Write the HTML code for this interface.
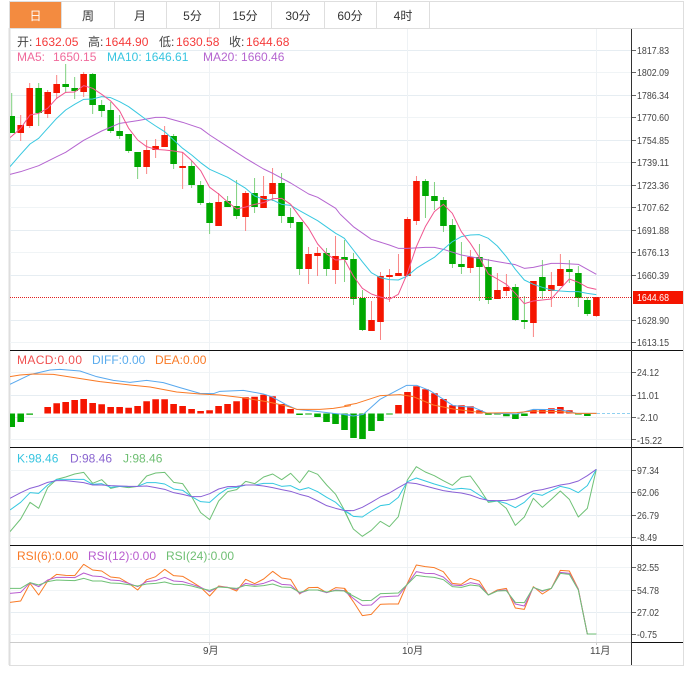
<!DOCTYPE html>
<html><head><meta charset="utf-8"><style>
html,body{margin:0;padding:0;background:#fff;width:693px;height:675px;overflow:hidden}
svg{display:block}
text{font-family:"Liberation Sans","Noto Sans CJK SC",sans-serif;font-size:12px}
.t{font-size:12px;fill:#333;text-anchor:middle}
.a{font-size:10px;fill:#444}
.l{fill:none;stroke-width:3;stroke-linejoin:round}
</style></head><body>
<svg width="693" height="675" viewBox="0 0 693 675" xmlns="http://www.w3.org/2000/svg">
<defs><clipPath id="c"><rect x="10" y="29" width="621" height="613"/></clipPath></defs>
<!-- toolbar -->
<rect x="10" y="2" width="51" height="26" fill="#f38b40"/>
<path d="M9 1.5H683.5V665.5H9.5V1.5M10 28.5H683.5M61.5 2V28M114.5 2V28M166.5 2V28M219.5 2V28M271.5 2V28M324.5 2V28M376.5 2V28M429.5 2V28" fill="none" stroke="#dedede"/>
<path d="M9.5 28V665" stroke="#dedede" stroke-width="2" fill="none"/>
<text class="t" x="35.5" y="20" style="fill:#fff">日</text>
<text class="t" x="88" y="20">周</text>
<text class="t" x="140" y="20">月</text>
<text class="t" x="192.5" y="20">5分</text>
<text class="t" x="245" y="20">15分</text>
<text class="t" x="298" y="20">30分</text>
<text class="t" x="350" y="20">60分</text>
<text class="t" x="403" y="20">4时</text>
<!-- grid -->
<path d="M10 50.5H631M10 95.5H631M10 140.5H631M10 185.5H631M10 230.5H631M10 275.5H631M10 320.5H631M10 395.5H631M10 417.5H631M10 492.5H631M10 515.5H631M10 612.5H631" stroke="#e6edf2" fill="none"/>
<path d="M10 72.5H631M10 117.5H631M10 162.5H631M10 207.5H631M10 252.5H631M10 342.5H631M10 372.5H631M10 439.5H631M10 470.5H631M10 537.5H631M10 567.5H631M10 590.5H631M10 634.5H631" stroke="#f0f4f6" fill="none"/>
<path d="M209.5 29V642M407.5 29V642M596.5 29V642" stroke="#eef2f5" fill="none"/>
<!-- chart -->
<g clip-path="url(#c)">
<g transform="translate(11.7 0) scale(.99944 1)" fill="none">
<path stroke="#7fd17f" d="M0 93V133M27 83V126M54 64V93M63 77V99M81 73V114M90 100V117M99 102V133M108 115V139M117 134V153M126 152V179M162 134V169M180 161V188M189 181V205M198 202V234M216 196V207M225 180V219M243 178V213M270 173V223M279 208V228M288 222V275M315 248V276M333 240V282M342 253V305M351 290V331M414 179V218M423 182V210M432 197V232M441 219V268M450 242V274M468 244V301M477 259V304M504 284V321M513 296V329M531 260V299M558 260V283M567 266V307M576 297V316"/>
<path stroke="#f98686" d="M9 115V141M18 83V128M36 90V118M45 75V99M72 72V97M135 140V174M144 139V158M153 126V147M171 152V189M207 193V226M234 191V231M252 176V208M261 168V201M297 247V284M306 247V276M324 236V284M360 301V331M369 272V340M378 269V302M387 254V276M396 217V276M405 176V225M459 250V273M486 273V299M495 274V296M522 281V337M540 272V307M549 254V286M585 297V317"/>
<path stroke="#00a800" stroke-width="6.6" d="M0 116V133M27 88V113M54 84V87M63 88V91M81 74V105M90 105V111M99 110V131M108 131V136M117 134V151M126 152V167M162 136V164M180 166V185M189 185V203M198 203V223M216 201V207M225 206V216M243 193V207M270 183V216M279 217V223M288 222V269M315 253V269M333 257V260M342 259V299M351 298V330M414 181V196M423 196V201M432 200V226M441 225V264M450 264V267M468 257V267M477 267V300M504 287V320M513 320V322M531 277V291M558 269V272M567 273V298M576 300V314"/>
<path stroke="#f51500" stroke-width="6.6" d="M9 125V133M18 88V126M36 92V114M45 84V93M72 74V92M135 150V167M144 146V150M153 135V147M171 166V168M207 202V226M234 193V217M252 196V208M261 183V194M297 254V269M306 253V256M324 256V270M360 320V331M369 276V322M378 275V277M387 273V276M396 219V276M405 181V221M459 257V268M486 290V299M495 287V291M522 281V323M540 285V291M549 269V286M585 297V316"/>
<!-- MACD bars -->
<path stroke="#f51500" stroke-width="6.6" d="M36 407V413.5M45 403.3V413.5M54 402V413.5M63 400V413.5M72 399V413.5M81 403V413.5M90 404.3V413.5M99 407V413.5M108 407V413.5M117 407.7V413.5M126 406V413.5M135 401.3V413.5M144 399.3V413.5M153 399.3V413.5M162 404V413.5M171 406V413.5M180 409V413.5M189 411V413.5M198 410.3V413.5M207 406V413.5M216 404V413.5M225 401.3V413.5M234 397.3V413.5M243 396.7V413.5M252 394.7V413.5M261 396.3V413.5M270 404V413.5M279 409V413.5M387 405V413.5M396 392V413.5M405 386.3V413.5M414 389.3V413.5M423 393.3V413.5M432 399V413.5M441 405.3V413.5M450 405.3V413.5M459 406.3V413.5M468 410.3V413.5M522 410V413.5M531 410V413.5M540 408.3V413.5M549 407V413.5M558 410.3V413.5"/>
<path stroke="#00a800" stroke-width="6.6" d="M0 413.5V427M9 413.5V422M18 413.5V414.7M288 413.5V415M297 413.5V414.5M306 413.5V417M315 413.5V422M324 413.5V424M333 413.5V430M342 413.5V438M351 413.5V439M360 413.5V431M369 413.5V421M378 413.5V414.5M477 413.5V414.7M486 413.5V414.5M495 413.5V416.3M504 413.5V419M513 413.5V416M567 413.5V414.5M576 413.5V416"/>
</g>
<path d="M597 413.5H631" stroke="#8fd0f0" stroke-dasharray="3 2" fill="none"/>
<path d="M10 297.5H631" stroke="#e02020" stroke-dasharray="1 1" fill="none"/>
<!-- MA lines -->
<g transform="scale(.33333)">
<polyline class="l" stroke="#b565d0" points="30,523 62,515 116,497 170,470 197,457 251,421 305,393 359,370 413,362 467,352 494,352 548,367 602,385 629,405 683,440 737,475 791,507 818,520 872,549 926,582 953,592 1007,625 1020,642"/>
<polyline class="l" stroke="#38c8e0" points="30,500 62,463 90,432 116,415 143,385 170,355 197,330 224,313 251,298 278,297 305,290 332,293 359,305 386,320 413,340 440,360 467,378 494,395 521,420 548,445 575,465 602,488 629,508 683,532 737,565 764,588 791,598 818,600 845,613 872,616 899,632 953,662 1007,700 1020,707"/>
<polyline class="l" stroke="#f0558f" points="30,413 62,385 90,345 116,340 143,325 170,295 197,277 224,276 251,257 278,265 305,283 332,303 359,333 386,385 413,420 440,440 467,448 494,450 521,453 548,457 575,482 602,512 629,562 656,582 683,606 710,627 737,621 764,613 791,608 818,596 845,595 872,613 899,650 926,685 953,732 980,762 1007,780 1034,778"/>
</g>
<g transform="translate(340 170) scale(.33333)">
<polyline class="l" stroke="#b565d0" points="0,132 40,170 94,208 148,225 175,235 202,235 256,232 283,232 310,238 364,255 418,265 472,275 526,284 553,295 580,292 607,286 634,280 661,280 715,283 742,298 769,313"/>
<polyline class="l" stroke="#38c8e0" points="0,197 13,205 40,240 67,275 94,308 121,323 148,329 175,330 202,318 229,295 256,278 283,262 310,238 337,215 364,200 391,195 418,194 445,205 472,228 499,260 526,298 553,330 580,343 607,352 634,360 661,363 688,365 715,365 742,370 769,374"/>
<polyline class="l" stroke="#f0558f" points="13,268 40,318 67,355 94,372 121,381 148,388 175,373 202,310 229,230 256,170 283,125 310,103 337,130 364,185 391,220 418,262 445,312 472,327 499,343 526,370 553,401 580,393 607,390 634,387 661,356 688,327 715,337 742,352 769,358"/>
</g>
<!-- MACD lines -->
<g transform="translate(0 345) scale(.33333)">
<polyline class="l" stroke="#58a8ee" points="30,118 90,89 150,75 180,73 240,78 290,95 340,106 390,112 440,106 490,113 540,128 600,145 640,146 660,139 730,136 790,147 815,155 860,180 890,193 950,199 1000,205 1053,210"/>
<polyline class="l" stroke="#f97a26" points="30,95 60,90 100,87 160,88 230,99 300,110 390,120 450,126 530,141 600,147 660,150 720,157 800,170 860,183 890,193 960,193 1000,190 1053,182"/>
</g>
<g transform="translate(340 345) scale(.33333)">
<polyline class="l" stroke="#58a8ee" points="13,209 40,213 70,208 120,163 200,121 230,121 270,137 340,182 400,187 440,204 530,207 580,193 660,194 710,205 770,205"/>
<polyline class="l" stroke="#f97a26" points="13,182 50,175 120,152 180,149 220,155 280,180 340,192 400,200 440,204 530,203 580,198 660,200 710,205 770,205"/>
</g>
<!-- KDJ -->
<g transform="translate(0 445) scale(.33333)">
<polyline class="l" stroke="#6fc176" points="30,260 62,222 90,172 116,190 143,128 170,103 197,96 224,87 251,82 278,115 305,104 332,130 359,124 386,128 413,124 440,93 467,84 494,82 521,112 548,116 575,155 602,203 629,224 656,168 683,140 710,134 737,109 764,116 791,96 818,87 845,104 872,85 899,113 926,77 953,88 980,120 1007,148 1034,197 1053,238"/>
<polyline class="l" stroke="#35c8e0" points="30,195 62,172 90,143 116,145 143,120 170,103 197,103 224,103 251,103 278,118 305,116 332,127 359,124 386,125 413,124 440,113 467,113 494,117 521,132 548,136 575,155 602,170 629,172 656,148 683,130 710,127 737,120 764,120 791,115 818,115 845,124 872,122 899,135 926,128 953,140 980,157 1007,172 1034,197 1053,208"/>
<polyline class="l" stroke="#8a60d6" points="30,160 62,143 90,130 116,123 143,112 170,107 197,107 224,110 251,113 278,120 305,120 332,122 359,123 386,124 413,124 440,123 467,128 494,133 521,143 548,148 575,155 602,155 629,146 656,132 683,125 710,124 737,120 764,120 791,123 818,128 845,134 872,139 899,148 926,155 953,168 980,182 1007,190 1034,197 1053,197"/>
</g>
<g transform="translate(340 445) scale(.33333)">
<polyline class="l" stroke="#6fc176" points="13,197 40,252 67,274 94,256 121,229 148,245 175,215 202,105 229,65 256,81 283,92 310,107 337,121 364,97 391,93 418,130 445,172 472,168 499,190 526,241 553,216 580,160 607,187 634,163 661,138 688,163 715,216 742,190 769,73"/>
<polyline class="l" stroke="#35c8e0" points="13,197 40,214 67,216 94,198 121,182 148,178 175,157 202,110 229,99 256,108 283,117 310,125 337,133 364,130 391,133 418,150 445,168 472,168 499,175 526,188 553,172 580,145 607,151 634,137 661,124 688,130 715,143 742,122 769,73"/>
<polyline class="l" stroke="#8a60d6" points="13,197 40,197 67,187 94,172 121,156 148,144 175,128 202,113 229,116 256,123 283,130 310,137 337,141 364,144 391,150 418,160 445,166 472,167 499,166 526,162 553,150 580,138 607,134 634,127 661,120 688,116 715,108 742,92 769,73"/>
</g>
<!-- RSI -->
<g transform="translate(0 545) scale(.33333)">
<polyline class="l" stroke="#f97a26" points="30,172 62,168 90,115 116,150 143,108 170,88 197,91 224,92 251,58 278,75 305,78 332,96 359,99 386,115 413,135 440,104 467,95 494,73 521,92 548,94 575,110 602,127 629,153 656,123 683,127 710,138 737,103 764,116 791,102 818,79 845,99 872,103 899,147 926,128 953,127 980,143 1007,128 1034,130 1053,155"/>
<polyline class="l" stroke="#b85ccf" points="30,145 62,142 90,113 116,125 143,105 170,97 197,97 224,98 251,84 278,93 305,95 332,105 359,107 386,115 413,125 440,110 467,107 494,97 521,108 548,110 575,118 602,127 629,140 656,125 683,127 710,133 737,115 764,120 791,115 818,105 845,118 872,120 899,145 926,135 953,135 980,143 1007,135 1034,137 1053,152"/>
<polyline class="l" stroke="#6fc176" points="30,130 62,130 90,113 116,120 143,110 170,105 197,106 224,107 251,100 278,108 305,108 332,114 359,115 386,119 413,123 440,117 467,115 494,111 521,118 548,118 575,123 602,130 629,136 656,126 683,128 710,130 737,121 764,124 791,122 818,117 845,126 872,127 899,142 926,135 953,135 980,141 1007,137 1034,138 1053,147"/>
</g>
<g transform="translate(340 545) scale(.33333)">
<polyline class="l" stroke="#f97a26" points="13,131 40,170 67,212 94,208 121,178 148,177 175,177 202,115 229,60 256,65 283,68 310,80 337,115 364,118 391,100 418,108 445,150 472,135 499,130 526,189 553,193 580,125 607,147 634,130 661,76 688,78 715,132 742,267 769,267"/>
<polyline class="l" stroke="#b85ccf" points="13,138 40,160 67,181 94,180 121,156 148,154 175,153 202,118 229,80 256,85 283,86 310,96 337,120 364,122 391,113 418,118 445,150 472,137 499,135 526,177 553,183 580,127 607,139 634,130 661,82 688,85 715,133 742,267 769,267"/>
<polyline class="l" stroke="#6fc176" points="13,139 40,153 67,167 94,166 121,146 148,145 175,144 202,118 229,91 256,95 283,97 310,104 337,125 364,127 391,120 418,123 445,150 472,138 499,137 526,172 553,173 580,127 607,137 634,130 661,85 688,88 715,135 742,267 769,267"/>
</g>
</g>
<!-- separators -->
<path d="M10 350.5H683M10 447.5H683M10 545.5H683M631 642.5H683" stroke="#111" fill="none"/>
<path d="M10 642.5H631M209.5 642V645M407.5 642V645M596.5 642V645" stroke="#ccc" fill="none"/>
<path d="M631.5 29V665" stroke="#333" fill="none"/>
<path d="M632 50.5h4M632 72.5h4M632 95.5h4M632 117.5h4M632 140.5h4M632 162.5h4M632 185.5h4M632 207.5h4M632 230.5h4M632 252.5h4M632 275.5h4M632 320.5h4M632 342.5h4M632 372.5h4M632 395.5h4M632 417.5h4M632 439.5h4M632 470.5h4M632 492.5h4M632 515.5h4M632 537.5h4M632 567.5h4M632 590.5h4M632 612.5h4M632 634.5h4" stroke="#666" fill="none"/>
<rect x="633" y="291" width="50" height="13" fill="#f51500"/>
<!-- axis labels -->
<text class="a" x="637" y="54" textLength="32" lengthAdjust="spacingAndGlyphs">1817.83</text>
<text class="a" x="637" y="76" textLength="32" lengthAdjust="spacingAndGlyphs">1802.09</text>
<text class="a" x="637" y="99" textLength="32" lengthAdjust="spacingAndGlyphs">1786.34</text>
<text class="a" x="637" y="121" textLength="32" lengthAdjust="spacingAndGlyphs">1770.60</text>
<text class="a" x="637" y="144" textLength="32" lengthAdjust="spacingAndGlyphs">1754.85</text>
<text class="a" x="637" y="166" textLength="32" lengthAdjust="spacingAndGlyphs">1739.11</text>
<text class="a" x="637" y="189" textLength="32" lengthAdjust="spacingAndGlyphs">1723.36</text>
<text class="a" x="637" y="211" textLength="32" lengthAdjust="spacingAndGlyphs">1707.62</text>
<text class="a" x="637" y="234" textLength="32" lengthAdjust="spacingAndGlyphs">1691.88</text>
<text class="a" x="637" y="256" textLength="32" lengthAdjust="spacingAndGlyphs">1676.13</text>
<text class="a" x="637" y="279" textLength="32" lengthAdjust="spacingAndGlyphs">1660.39</text>
<text class="a" x="637" y="301" textLength="32" lengthAdjust="spacingAndGlyphs" style="fill:#fff">1644.68</text>
<text class="a" x="637" y="324" textLength="32" lengthAdjust="spacingAndGlyphs">1628.90</text>
<text class="a" x="637" y="346" textLength="32" lengthAdjust="spacingAndGlyphs">1613.15</text>
<text class="a" x="637" y="376" textLength="22" lengthAdjust="spacingAndGlyphs">24.12</text>
<text class="a" x="637" y="399" textLength="22" lengthAdjust="spacingAndGlyphs">11.01</text>
<text class="a" x="637" y="421" textLength="21" lengthAdjust="spacingAndGlyphs">-2.10</text>
<text class="a" x="637" y="444" textLength="25" lengthAdjust="spacingAndGlyphs">-15.22</text>
<text class="a" x="637" y="474" textLength="22" lengthAdjust="spacingAndGlyphs">97.34</text>
<text class="a" x="637" y="496" textLength="22" lengthAdjust="spacingAndGlyphs">62.06</text>
<text class="a" x="637" y="519" textLength="22" lengthAdjust="spacingAndGlyphs">26.79</text>
<text class="a" x="637" y="541" textLength="20" lengthAdjust="spacingAndGlyphs">-8.49</text>
<text class="a" x="637" y="571" textLength="22" lengthAdjust="spacingAndGlyphs">82.55</text>
<text class="a" x="637" y="594" textLength="22" lengthAdjust="spacingAndGlyphs">54.78</text>
<text class="a" x="637" y="616" textLength="22" lengthAdjust="spacingAndGlyphs">27.02</text>
<text class="a" x="637" y="638" textLength="20" lengthAdjust="spacingAndGlyphs">-0.75</text>
<text class="a" x="203" y="654">9月</text>
<text class="a" x="402" y="654">10月</text>
<text class="a" x="590" y="654">11月</text>
<!-- legends -->
<text y="46"><tspan x="17" fill="#444">开:</tspan><tspan x="35" fill="#f53a3a">1632.05</tspan><tspan x="88" fill="#444">高:</tspan><tspan x="105" fill="#f53a3a">1644.90</tspan><tspan x="159" fill="#444">低:</tspan><tspan x="176" fill="#f53a3a">1630.58</tspan><tspan x="229" fill="#444">收:</tspan><tspan x="246" fill="#f53a3a">1644.68</tspan></text>
<text y="61"><tspan x="17" fill="#f06a9b">MA5:</tspan><tspan x="53" fill="#f06a9b">1650.15</tspan><tspan x="107" fill="#38c5e0">MA10: 1646.61</tspan><tspan x="203" fill="#b565d0">MA20: 1660.46</tspan></text>
<text y="364"><tspan x="17" fill="#f05050" textLength="65">MACD:0.00</tspan></text>
<text y="364"><tspan x="92" fill="#5aacee">DIFF:0.00</tspan><tspan x="155" fill="#f97a26">DEA:0.00</tspan></text>
<text y="462.5"><tspan x="17" fill="#38c5e0">K:98.46</tspan><tspan x="70" fill="#8a65d0">D:98.46</tspan><tspan x="123" fill="#6fbf73">J:98.46</tspan></text>
<text y="560"><tspan x="17" fill="#f97a26">RSI(6):0.00</tspan><tspan x="88" fill="#b85ccf">RSI(12):0.00</tspan><tspan x="166" fill="#6fbf73">RSI(24):0.00</tspan></text>
</svg>
</body></html>
